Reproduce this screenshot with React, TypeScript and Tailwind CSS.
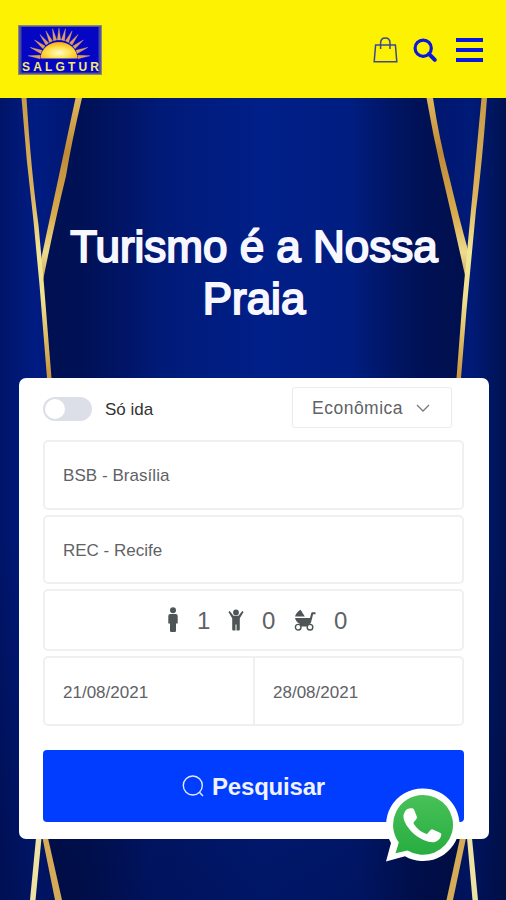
import React, { useState } from 'react';

const rays = [-84, -68, -52, -38, -25, -12, 0, 12, 25, 38, 52, 68, 84];

const Logo: React.FC = () => (
  <svg width="84" height="50" viewBox="0 0 84 50" role="img" aria-label="Salgtur">
    <defs>
      <radialGradient id="sun" cx="50%" cy="65%" r="65%">
        <stop offset="0" stopColor="#fffbd0" />
        <stop offset="0.5" stopColor="#ffe14a" />
        <stop offset="1" stopColor="#f9a818" />
      </radialGradient>
    </defs>
    <rect width="84" height="50" fill="#8a8a78" />
    <rect x="1.2" y="1.2" width="81.6" height="47.6" fill="#4a4a9c" />
    <rect x="3.5" y="2" width="77" height="45.5" fill="#0505c4" />
    {rays.map((deg, i) => (
      <path
        key={i}
        d="M-1.7 -19 L0 -31 L1.7 -19 Z"
        fill="#e39a58"
        stroke="#f0c47c"
        strokeWidth="0.3"
        transform={`translate(41 34) rotate(${deg})`}
      />
    ))}
    <path d="M22.5 33.5 A18.5 16.5 0 0 1 59.5 33.5 Z" fill="url(#sun)" />
    <text
      x="4"
      y="46"
      textLength="77"
      lengthAdjust="spacing"
      fontFamily="Liberation Sans, sans-serif"
      fontSize="12"
      fontWeight="700"
      fill="#f4ea72"
    >
      SALGTUR
    </text>
  </svg>
);

const Ribbons: React.FC = () => (
  <svg className="absolute inset-0 h-full w-full" viewBox="0 98 506 802" preserveAspectRatio="none" fill="none">
    <defs>
      <linearGradient id="thin" gradientUnits="userSpaceOnUse" x1="0" y1="98" x2="0" y2="378">
        <stop offset="0" stopColor="#c89a4a" />
        <stop offset="0.35" stopColor="#deb45c" />
        <stop offset="0.55" stopColor="#f2e596" />
        <stop offset="0.72" stopColor="#f0e08c" />
        <stop offset="1" stopColor="#c8953c" />
      </linearGradient>
      <linearGradient id="thick" gradientUnits="userSpaceOnUse" x1="0" y1="98" x2="0" y2="280">
        <stop offset="0" stopColor="#e0b75c" />
        <stop offset="0.3" stopColor="#bf8a38" />
        <stop offset="0.65" stopColor="#d9ad50" />
        <stop offset="0.85" stopColor="#eedb8c" />
        <stop offset="1" stopColor="#c9a558" />
      </linearGradient>
      <linearGradient id="shadeL" x1="0" x2="1">
        <stop offset="0" stopColor="#000932" stopOpacity="0.6" />
        <stop offset="0.4" stopColor="#000932" stopOpacity="0.4" />
        <stop offset="1" stopColor="#000932" stopOpacity="0" />
      </linearGradient>
      <linearGradient id="shadeR" x1="1" x2="0">
        <stop offset="0" stopColor="#000932" stopOpacity="0.6" />
        <stop offset="0.4" stopColor="#000932" stopOpacity="0.4" />
        <stop offset="1" stopColor="#000932" stopOpacity="0" />
      </linearGradient>
    </defs>
    <path d="M79 98 Q68 155 58 200 L42 275 L50 378 L160 378 V98 Z" fill="url(#shadeL)" />
    <path d="M429 98 Q440 155 451 200 L467 275 L459 378 L350 378 V98 Z" fill="url(#shadeR)" />
    <path d="M46 838 L60 900 H150 V838 Z" fill="url(#shadeL)" />
    <path d="M463 838 L450 900 H360 V838 Z" fill="url(#shadeR)" />

    <path d="M75.5 98 H82 Q72 140 66 176 Q54 225 42.5 283 L40.5 262 Q49 222 58 180 Z" fill="url(#thick)" />
    <path d="M21.5 98 H26.5 Q31 170 38.5 225 L44 285 L51.5 378 H47 L39.5 285 L33.5 221 Q26 160 21.5 98 Z" fill="url(#thin)" />

    <path d="M426.5 98 H433 Q439 138 449 176 Q459 218 468 250 L466 280 Q454 225 441 170 Q433 135 426.5 98 Z" fill="url(#thick)" />
    <path d="M481.5 98 H487 Q482 165 476 210 L466.5 310 L461 378 H456.5 L462.5 300 L470.5 215 Z" fill="url(#thin)" />

    <path d="M36 838 H41.5 L35.5 900 H30 Z" fill="#efe3a4" />
    <path d="M42.5 838 H48 L62 900 H55 Z" fill="#d6ab58" />
    <path d="M460 838 H466 L453 900 H446.5 Z" fill="#d6ab58" />
    <path d="M467 838 H472 L478 900 H472.5 Z" fill="#efe3a4" />
  </svg>
);

const AdultIcon: React.FC = () => (
  <svg width="12" height="26" viewBox="0 0 12 26" fill="#4f5557">
    <circle cx="6" cy="3.2" r="3" />
    <path d="M3.2 7 H8.8 Q10.7 7 10.7 9 V16.5 H9 V24 Q9 25 7.8 25 H4.2 Q3 25 3 24 V16.5 H1.3 V9 Q1.3 7 3.2 7 Z" />
  </svg>
);

const ChildIcon: React.FC = () => (
  <svg width="16" height="22" viewBox="0 0 16 22" fill="#4f5557">
    <circle cx="8" cy="3.4" r="2.9" />
    <path d="M1.7 1.9 L5.5 6.7 H10.5 L14.3 1.9 L15.6 3.1 L11.8 9.3 V20.5 Q11.8 21.5 10.7 21.5 H8.5 V15.5 H7.5 V21.5 H5.3 Q4.2 21.5 4.2 20.5 V9.3 L0.4 3.1 Z" />
  </svg>
);

const BabyIcon: React.FC = () => (
  <svg width="22" height="22" viewBox="0 0 22 22">
    <path d="M1 7.6 Q2.2 3 6.6 0.7 L10.8 7.6 Z" fill="#4f5557" />
    <path d="M1 9 H16 L17.2 4.2 Q17.5 3.3 18.3 3.3 H21.5 V5.2 H19.1 L17 13.5 Q16.6 15 15 15 L16.5 17.5 H4.5 L6 15 Q2.2 13.5 1 9 Z" fill="#4f5557" />
    <circle cx="4.2" cy="18.2" r="2.8" fill="#fff" stroke="#4f5557" strokeWidth="1.4" />
    <circle cx="16" cy="18.2" r="2.8" fill="#fff" stroke="#4f5557" strokeWidth="1.4" />
  </svg>
);

const WhatsAppIcon: React.FC = () => (
  <svg width="76" height="76" viewBox="0 0 76 76">
    <defs>
      <linearGradient id="wa" x1="0" y1="0" x2="0" y2="1">
        <stop offset="0" stopColor="#48c158" />
        <stop offset="1" stopColor="#27ad40" />
      </linearGradient>
    </defs>
    <path d="M37.7 1.5 A36.3 36.3 0 1 1 20 69.2 L1 74.5 L6 56 A36.3 36.3 0 0 1 37.7 1.5 Z" fill="#fff" />
    <path d="M37.7 8 A29.9 29.9 0 1 1 22.5 63.4 L10.5 66.3 L13.8 55.5 A29.9 29.9 0 0 1 37.7 8 Z" fill="url(#wa)" />
    <path
      d="M20 24.5 Q22 20.8 27.2 21.3 Q28.6 21.5 29.2 23 L31.8 29.5 Q32.2 30.8 31.4 31.9 L28.8 35.2 Q28.3 36 28.8 36.9 Q33.2 43.8 41 46.8 Q42 47.2 42.7 46.3 L45.8 42.8 Q46.6 41.9 47.8 42.4 L55 45.7 Q56.5 46.4 56.3 47.8 Q55.4 53.3 50 55 Q46 56.2 38.5 53 Q28 48.4 21.5 38.2 Q16.3 30.3 20 24.5 Z"
      fill="#fff"
    />
  </svg>
);

const passengers = [
  { id: 'adult', icon: <AdultIcon />, count: 1, style: 'gap-[18px] w-[61px]' },
  { id: 'child', icon: <ChildIcon />, count: 0, style: 'gap-[18px] w-[66px]' },
  { id: 'baby', icon: <BabyIcon />, count: 0, style: 'gap-[18px]' },
];

export default function App() {
  const [oneWay, setOneWay] = useState(false);

  return (
    <div className="flex h-[900px] w-[506px] flex-col overflow-hidden font-['Liberation_Sans',Arial,sans-serif]">
      <header className="flex h-[98px] shrink-0 items-center justify-between bg-[#fdf202] pl-[18px] pr-[23px] pt-0.5">
        <Logo />
        <div className="flex items-center">
          <button aria-label="Carrinho" className="mr-[15px]">
            <svg width="25" height="26" viewBox="0 0 25 26" fill="none" stroke="#3c4796" strokeWidth="1.5">
              <path d="M2.6 8 H22.4 L23.8 24.7 H1.2 Z" />
              <path d="M7.6 12 V6 Q7.6 1 12.3 1 Q17 1 17 6 V12" />
            </svg>
          </button>
          <button aria-label="Buscar" className="mr-[18px]">
            <svg width="25" height="25" viewBox="0 0 25 25" fill="none" stroke="#0918dc">
              <circle cx="10.2" cy="10.2" r="8.1" strokeWidth="3.2" />
              <path d="M16 16 L21.8 21.8" strokeWidth="4" strokeLinecap="round" />
            </svg>
          </button>
          <button aria-label="Menu" className="flex flex-col gap-1.5">
            <span className="h-1 w-[27px] bg-[#0918dc]" />
            <span className="h-1 w-[27px] bg-[#0918dc]" />
            <span className="h-1 w-[27px] bg-[#0918dc]" />
          </button>
        </div>
      </header>

      <main className="relative flex-1 bg-[linear-gradient(90deg,#001468_0%,#001c82_7%,#001670_16%,#001a78_32%,#001f88_52%,#001d80_70%,#00166c_84%,#001a78_93%,#001250_100%)]">
        <div className="absolute inset-0 bg-[linear-gradient(180deg,transparent_55%,rgba(0,8,50,0.4)_100%)]" />
        <Ribbons />

        <div className="relative flex flex-col pl-[19px] pr-[17px] pt-[123px]">
          <h1 className="h-[157px] text-center text-[44px] font-normal leading-[52px] text-[#f8f7ff] [-webkit-text-stroke:1.9px_#f8f7ff]">
            Turismo é a Nossa
            <br />
            Praia
          </h1>

          <form
            className="flex h-[461px] flex-col rounded-[7px] bg-white pl-6 pr-[25px] pt-[9px] text-[17px] text-[#606266]"
            onSubmit={e => e.preventDefault()}
          >
            <div className="flex h-[41px] items-center justify-between pr-3">
              <label className="flex items-center gap-[13px] pt-0.5 text-[#333]">
                <button
                  type="button"
                  role="switch"
                  aria-checked={oneWay}
                  onClick={() => setOneWay(!oneWay)}
                  className={
                    oneWay
                      ? 'flex h-6 w-[49px] items-center justify-end rounded-full bg-[#003dff] p-0.5'
                      : 'flex h-6 w-[49px] items-center rounded-full bg-[#dcdfe8] p-0.5'
                  }
                >
                  <span className="size-5 rounded-full bg-white" />
                </button>
                <span className="pt-0.5">Só ida</span>
              </label>
              <button
                type="button"
                className="flex h-[41px] w-40 items-center justify-between rounded-[3px] border-[1.5px] border-[#e9ebee] pl-[19px] pr-[21px] text-[17.5px] tracking-[0.5px]"
              >
                <span className="pt-0.5">Econômica</span>
                <svg width="14" height="8" viewBox="0 0 14 8" fill="none" stroke="#777a80" strokeWidth="1.3">
                  <path d="M1 1 L7 7 L13 1" />
                </svg>
              </button>
            </div>

            <div className="mt-3 flex h-[70px] items-center rounded-[5px] border-2 border-[#eff0f2] pl-[18px] pt-0.5 tracking-[0.05px]">
              BSB - Brasília
            </div>
            <div className="mt-[5px] flex h-[69px] items-center rounded-[5px] border-2 border-[#eff0f2] pl-[18px] pt-0.5">
              REC - Recife
            </div>

            <div className="mt-[5px] flex h-[62px] items-center rounded-[5px] border-2 border-[#eff0f2] pl-[122px] text-2xl">
              {passengers.map(p => (
                <span key={p.id} className={`flex items-center ${p.style}`}>
                  {p.icon}
                  <span className="pt-0.5">{p.count}</span>
                </span>
              ))}
            </div>

            <div className="mt-[5px] flex h-[70px] rounded-[5px] border-2 border-[#eff0f2]">
              <div className="flex w-[210px] items-center border-r-2 border-[#eff0f2] pl-[18px] pt-[3px]">21/08/2021</div>
              <div className="flex items-center pl-[18px] pt-[3px]">28/08/2021</div>
            </div>

            <button
              type="submit"
              className="mt-6 flex h-[72px] items-center justify-center gap-2 rounded-[4px] bg-[#003dff] text-2xl font-bold tracking-[-0.2px] text-[#f0f2ff]"
            >
              <svg width="22" height="22" viewBox="0 0 22 22" fill="none" stroke="#e4e9ff" strokeWidth="1.4">
                <circle cx="10.8" cy="10.5" r="9.5" />
                <path d="M17.4 17.3 L21 21" />
              </svg>
              <span className="pt-px">Pesquisar</span>
            </button>
          </form>
        </div>

        <a href="#whatsapp" aria-label="WhatsApp" className="absolute left-[385px] top-[689px]">
          <WhatsAppIcon />
        </a>
      </main>
    </div>
  );
}
